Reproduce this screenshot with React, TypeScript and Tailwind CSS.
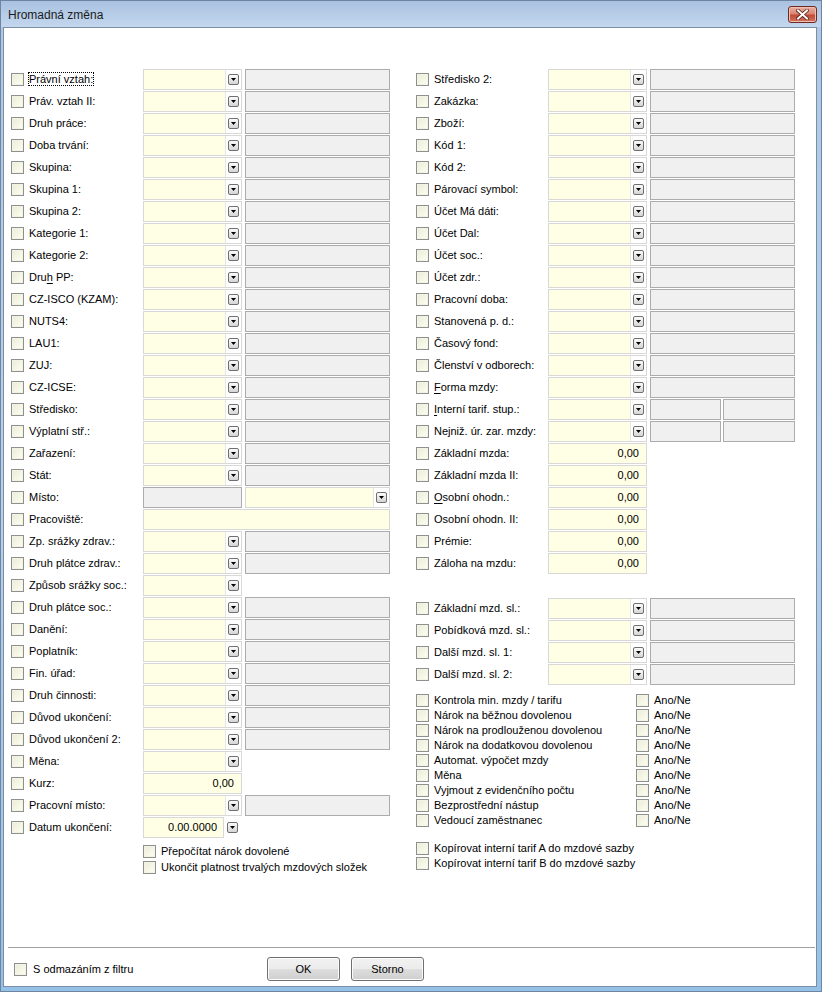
import React from "react";

type Kind = "ddg" | "dd" | "dd2" | "val" | "gdd" | "wide" | "date";

interface Row {
  label: string;
  kind: Kind;
  value?: string;
  u?: number; // index of underlined access key
  focus?: boolean;
}

const leftRows: Row[] = [
  { label: "Právní vztah:", kind: "ddg", focus: true },
  { label: "Práv. vztah II:", kind: "ddg" },
  { label: "Druh práce:", kind: "ddg" },
  { label: "Doba trvání:", kind: "ddg" },
  { label: "Skupina:", kind: "ddg" },
  { label: "Skupina 1:", kind: "ddg" },
  { label: "Skupina 2:", kind: "ddg" },
  { label: "Kategorie 1:", kind: "ddg" },
  { label: "Kategorie 2:", kind: "ddg" },
  { label: "Druh PP:", kind: "ddg", u: 3 },
  { label: "CZ-ISCO (KZAM):", kind: "ddg" },
  { label: "NUTS4:", kind: "ddg" },
  { label: "LAU1:", kind: "ddg" },
  { label: "ZUJ:", kind: "ddg" },
  { label: "CZ-ICSE:", kind: "ddg" },
  { label: "Středisko:", kind: "ddg" },
  { label: "Výplatní stř.:", kind: "ddg" },
  { label: "Zařazení:", kind: "ddg" },
  { label: "Stát:", kind: "ddg" },
  { label: "Místo:", kind: "gdd" },
  { label: "Pracoviště:", kind: "wide" },
  { label: "Zp. srážky zdrav.:", kind: "ddg" },
  { label: "Druh plátce zdrav.:", kind: "ddg" },
  { label: "Způsob srážky soc.:", kind: "dd" },
  { label: "Druh plátce soc.:", kind: "ddg" },
  { label: "Danění:", kind: "ddg" },
  { label: "Poplatník:", kind: "ddg" },
  { label: "Fin. úřad:", kind: "ddg" },
  { label: "Druh činnosti:", kind: "ddg" },
  { label: "Důvod ukončení:", kind: "ddg" },
  { label: "Důvod ukončení 2:", kind: "ddg" },
  { label: "Měna:", kind: "dd" },
  { label: "Kurz:", kind: "val", value: "0,00" },
  { label: "Pracovní místo:", kind: "ddg" },
  { label: "Datum ukončení:", kind: "date", value: "0.00.0000" },
];

const rightRows: Row[] = [
  { label: "Středisko 2:", kind: "ddg" },
  { label: "Zakázka:", kind: "ddg" },
  { label: "Zboží:", kind: "ddg" },
  { label: "Kód 1:", kind: "ddg" },
  { label: "Kód 2:", kind: "ddg" },
  { label: "Párovací symbol:", kind: "ddg" },
  { label: "Účet Má dáti:", kind: "ddg" },
  { label: "Účet Dal:", kind: "ddg" },
  { label: "Účet soc.:", kind: "ddg" },
  { label: "Účet zdr.:", kind: "ddg" },
  { label: "Pracovní doba:", kind: "ddg" },
  { label: "Stanovená p. d.:", kind: "ddg" },
  { label: "Časový fond:", kind: "ddg" },
  { label: "Členství v odborech:", kind: "ddg" },
  { label: "Forma mzdy:", kind: "ddg", u: 0 },
  { label: "Interní tarif. stup.:", kind: "dd2", u: 0 },
  { label: "Nejniž. úr. zar. mzdy:", kind: "dd2" },
  { label: "Základní mzda:", kind: "val", value: "0,00" },
  { label: "Základní mzda II:", kind: "val", value: "0,00" },
  { label: "Osobní ohodn.:", kind: "val", value: "0,00", u: 0 },
  { label: "Osobní ohodn. II:", kind: "val", value: "0,00" },
  { label: "Prémie:", kind: "val", value: "0,00" },
  { label: "Záloha na mzdu:", kind: "val", value: "0,00" },
];

const wageRows: Row[] = [
  { label: "Základní mzd. sl.:", kind: "ddg" },
  { label: "Pobídková mzd. sl.:", kind: "ddg" },
  { label: "Další mzd. sl. 1:", kind: "ddg" },
  { label: "Další mzd. sl. 2:", kind: "ddg" },
];

const flags = [
  "Kontrola min. mzdy / tarifu",
  "Nárok na běžnou dovolenou",
  "Nárok na prodlouženou dovolenou",
  "Nárok na dodatkovou dovolenou",
  "Automat. výpočet mzdy",
  "Měna",
  "Vyjmout z evidenčního počtu",
  "Bezprostřední nástup",
  "Vedoucí zaměstnanec",
];

function Check() {
  return <span className="block w-[13px] h-[13px] shrink-0 border border-[#8e8f8f] bg-linear-to-br from-[#ebebd9] to-[#fffff2] shadow-[inset_0_0_0_1px_#f4f4e4]" />;
}

function DdButton() {
  return (
    <span className="flex items-center justify-center w-[11px] h-[11px] rounded-[2px] border border-[#6f6f6f] bg-linear-to-b from-[#fbfbfb] to-[#d5d5d5]">
      <svg width="5" height="3" viewBox="0 0 5 3">
        <path d="M0 0h5L2.5 3z" fill="#000" />
      </svg>
    </span>
  );
}

function Dropdown({ wide }: { wide?: boolean }) {
  return (
    <div className={`flex h-full border border-[#d8d8d8] bg-white ${wide ? "w-[145px] ml-[3px]" : "w-[99px]"}`}>
      <div className="flex-1 bg-[#ffffe6]" />
      <div className="w-[16px] flex items-center justify-center border-l border-[#e6e6e6]">
        <DdButton />
      </div>
    </div>
  );
}

function Label({ row }: { row: Row }) {
  const t = row.label;
  const content =
    row.u === undefined ? (
      t
    ) : (
      <>
        {t.slice(0, row.u)}
        <span className="underline underline-offset-2">{t[row.u]}</span>
        {t.slice(row.u + 1)}
      </>
    );
  return (
    <div className="w-[114px] ml-[5px] shrink-0 whitespace-nowrap">
      <span className={row.focus ? "outline outline-1 outline-dotted outline-black" : ""}>{content}</span>
    </div>
  );
}

function Fields({ row }: { row: Row }) {
  switch (row.kind) {
    case "ddg":
      return (
        <>
          <Dropdown />
          <div className="h-full w-[145px] ml-[3px] border border-[#acacac] bg-[#f0f0f0]" />
        </>
      );
    case "dd":
      return <Dropdown />;
    case "dd2":
      return (
        <>
          <Dropdown />
          <div className="h-full w-[71px] ml-[3px] border border-[#acacac] bg-[#f0f0f0]" />
          <div className="h-full w-[72px] ml-[2px] border border-[#acacac] bg-[#f0f0f0]" />
        </>
      );
    case "val":
      return (
        <div className="h-full w-[99px] border border-[#d8d8d8] bg-[#ffffe6] flex items-center justify-end pr-[7px]">
          {row.value}
        </div>
      );
    case "gdd":
      return (
        <>
          <div className="h-full w-[99px] border border-[#acacac] bg-[#f0f0f0]" />
          <Dropdown wide />
        </>
      );
    case "wide":
      return <div className="h-full w-[247px] border border-[#d8d8d8] bg-[#ffffe6]" />;
    case "date":
      return (
        <>
          <div className="h-full w-[81px] border border-[#d8d8d8] bg-[#ffffe6] flex items-center justify-end pr-[6px]">
            {row.value}
          </div>
          <div className="ml-[3px]">
            <DdButton />
          </div>
        </>
      );
  }
}

function FormRow({ row }: { row: Row }) {
  return (
    <div className="flex items-center h-[22px] pb-[1px]">
      <Check />
      <Label row={row} />
      <div className="flex items-center h-full">
        <Fields row={row} />
      </div>
    </div>
  );
}

function CheckLine({ label, h }: { label: string; h: string }) {
  return (
    <div className={`flex items-center ${h}`}>
      <Check />
      <span className="ml-[5px] whitespace-nowrap">{label}</span>
    </div>
  );
}

function WinButton({ label }: { label: string }) {
  return (
    <button className="w-[73px] h-[24px] rounded-[3px] border border-[#707070] bg-[linear-gradient(to_bottom,#f2f2f2_0%,#ebebeb_50%,#dddddd_51%,#cfcfcf_100%)] shadow-[inset_0_0_0_1px_#fbfbfb] text-[11px] text-black">
      {label}
    </button>
  );
}

export default function App() {
  return (
    <div className="w-[822px] h-[992px] flex flex-col border border-[#6d85a3] bg-linear-to-b from-[#afc8e5] via-[#bad0ea] to-[#94c2e6] text-[11px] text-black font-['Liberation_Sans',Arial,sans-serif]">
      {/* Title bar */}
      <div className="h-[26px] shrink-0 flex items-center justify-between pl-[7px] pr-[4px] bg-linear-to-b from-[#a9c2e1] to-[#c3d7ee]">
        <span className="text-[12px] text-[#1b1b1b] pt-[1px]">Hromadná změna</span>
        <div className="w-[29px] h-[17px] mt-[1px] flex items-center justify-center rounded-[3px] border border-[#6d2a22] bg-[linear-gradient(to_bottom,#eab1a3_0%,#d98572_45%,#c24b36_55%,#d27560_100%)] shadow-[inset_0_0_0_1px_#eebfb3]">
          <svg width="13" height="11" viewBox="0 0 13 11">
            <path d="M2 1.5l9 8M11 1.5l-9 8" stroke="#5a1d16" strokeWidth="3.6" strokeLinecap="square" />
            <path d="M2 1.5l9 8M11 1.5l-9 8" stroke="#fff" strokeWidth="2" strokeLinecap="square" />
          </svg>
        </div>
      </div>

      {/* Client area */}
      <div className="flex-1 flex flex-col ml-[2px] mr-[4px] mb-[4px] border border-[#7b8ea6] bg-white">
        <div className="flex-1 flex pl-[7px] pt-[41px]">
          {/* Left column */}
          <div className="w-[405px] shrink-0 flex flex-col">
            {leftRows.map((r) => (
              <FormRow key={r.label} row={r} />
            ))}
            <div className="flex flex-col pl-[132px] mt-[5px]">
              <div className="h-[16px] pt-[1px] flex items-start">
                <Check />
                <span className="ml-[5px] leading-[13px]">Přepočítat nárok dovolené</span>
              </div>
              <div className="h-[16px] pt-[1px] flex items-start">
                <Check />
                <span className="ml-[5px] leading-[13px]">Ukončit platnost trvalých mzdových složek</span>
              </div>
            </div>
          </div>

          {/* Right column */}
          <div className="flex flex-col">
            {rightRows.map((r) => (
              <FormRow key={r.label} row={r} />
            ))}
            <div className="h-[23px]" />
            {wageRows.map((r) => (
              <FormRow key={r.label} row={r} />
            ))}
            <div className="flex flex-col mt-[7px]">
              {flags.map((f, i) => (
                <div key={i} className="flex items-center h-[15px]">
                  <div className="w-[220px] flex items-center">
                    <Check />
                    <span className="ml-[5px] whitespace-nowrap">{f}</span>
                  </div>
                  <Check />
                  <span className="ml-[5px]">Ano/Ne</span>
                </div>
              ))}
            </div>
            <div className="flex flex-col mt-[13px]">
              <CheckLine h="h-[15px]" label="Kopírovat interní tarif A do mzdové sazby" />
              <CheckLine h="h-[15px]" label="Kopírovat interní tarif B do mzdové sazby" />
            </div>
          </div>
        </div>

        {/* Bottom bar */}
        <div className="h-[39px] shrink-0 flex flex-col">
          <div className="ml-[4px] mr-[1px] h-px bg-[#a0a0a0]" />
          <div className="flex items-center h-[24px] mt-[9px] pl-[10px]">
            <Check />
            <span className="ml-[6px] w-[234px]">S odmazáním z filtru</span>
            <div className="flex gap-[11px]">
              <WinButton label="OK" />
              <WinButton label="Storno" />
            </div>
          </div>
        </div>
      </div>
    </div>
  );
}
